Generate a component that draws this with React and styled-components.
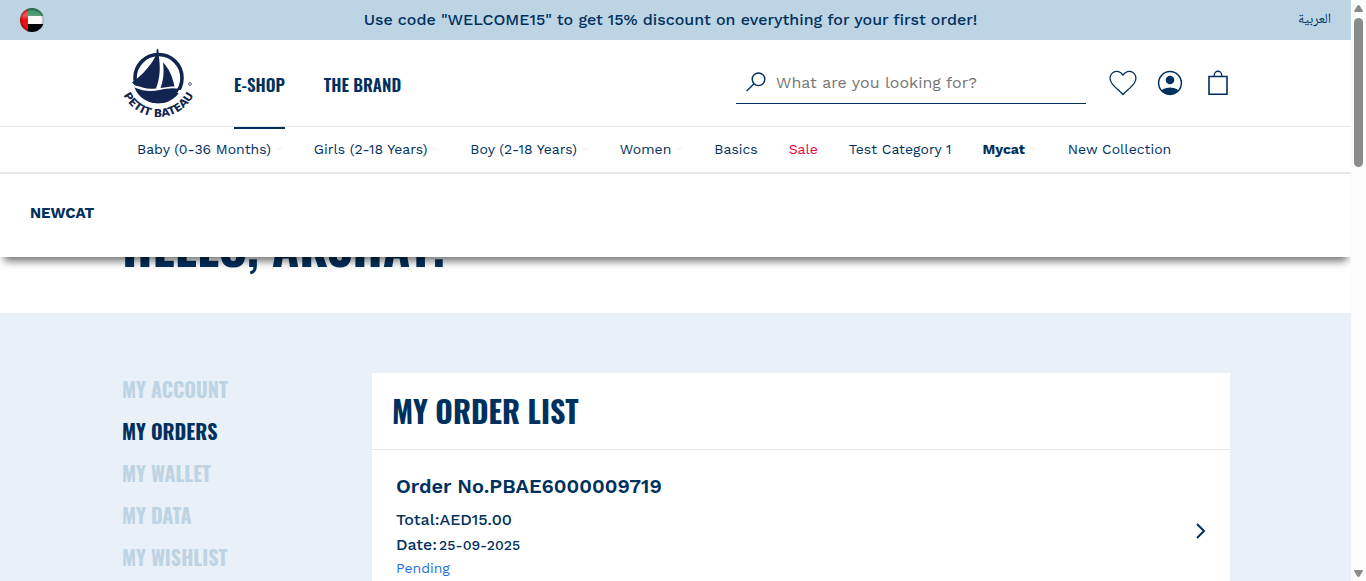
import React from "react";
import styled, { createGlobalStyle } from "styled-components";

const navy = "#00305e";
const sky = "#bdd4e4";
const pale = "#e9f0f7";
const rule = "#e8e8e8";
const display = `Oswald, "Roboto Condensed", "Liberation Sans", sans-serif`;
const body = `"Work Sans", Inter, "Liberation Sans", sans-serif`;

const GlobalStyle = createGlobalStyle`
  *, *::before, *::after { box-sizing: border-box; }
  body { margin: 0; background: #fff; color: ${navy}; font-family: ${body}; }
  h1, h2, h3, p, ul { margin: 0; padding: 0; }
  ul { list-style: none; }
  a { color: inherit; text-decoration: none; }
  button { display: flex; background: none; border: 0; padding: 0; color: inherit; font: inherit; cursor: pointer; }
`;

const Window = styled.div`
  display: grid;
  grid-template-columns: minmax(0, 1fr) 15px;
  height: 100vh;
  overflow: hidden;
`;

const Page = styled.div`
  position: relative;
  overflow: hidden;
`;

const Rail = styled.div`
  display: flex;
  flex-direction: column;
  align-items: center;
  background: #fcfcfc;
  padding: 5px 0 4px;
`;

const Thumb = styled.div`
  width: 9px;
  height: 149px;
  margin: 6px 0 auto;
  border-radius: 5px;
  background: #8b8b8b;
`;

const Promo = styled.div`
  display: grid;
  grid-template-columns: 90px minmax(0, 1fr) 100px;
  align-items: center;
  height: 40px;
  padding: 0 20px;
  background: ${sky};
`;

const PromoText = styled.p`
  text-align: center;
  font-size: 16px;
  font-weight: 500;
  line-height: 20px;
`;

const CountryButton = styled.button`
  width: 24px;
  height: 24px;
`;

const LanguageLink = styled.a`
  justify-self: end;
  font-family: "Noto Naskh Arabic", "Times New Roman", "DejaVu Sans", serif;
  font-size: 14px;
  line-height: 20px;
`;

const Masthead = styled.div`
  display: flex;
  height: 86px;
  padding: 0 122px;
`;

const LogoLink = styled.a`
  display: flex;
  width: 112px;
  padding-top: 8px;
`;

const MainNav = styled.nav`
  display: flex;
  gap: 39px;
  font-family: ${display};
  font-size: 17px;
  font-weight: 600;
  white-space: nowrap;
`;

const MainLink = styled.a`
  position: relative;
  z-index: 4;
  height: 89px;
  line-height: 90px;
  border-bottom: 2px solid ${(p) => (p.$active ? navy : "transparent")};
`;

const Search = styled.label`
  display: flex;
  align-items: center;
  gap: 10px;
  width: 350px;
  height: 44px;
  margin: 20px 23px 0 auto;
  padding-left: 10px;
  border-bottom: 1px solid ${navy};
`;

const SearchInput = styled.input`
  flex: 1;
  min-width: 0;
  padding: 2px 0 0;
  border: 0;
  outline: 0;
  background: transparent;
  color: ${navy};
  font: 400 16px/20px ${body};
  &::placeholder { color: #757575; opacity: 1; }
`;

const Actions = styled.div`
  display: flex;
  align-items: center;
  gap: 20px;
`;

const ActionButton = styled.button`
  justify-content: center;
  min-width: 22px;
  &:last-child { margin-left: 4px; }
`;

const Categories = styled.nav`
  position: relative;
  z-index: 3;
  display: flex;
  align-items: center;
  gap: 31px;
  height: 48px;
  padding: 0 137px 2px;
  background: #fff;
  border-top: 1px solid ${rule};
  border-bottom: 2px solid ${rule};
  font-size: 14px;
  line-height: 20px;
  white-space: nowrap;
`;

const Category = styled.a`
  display: flex;
  align-items: center;
  gap: 4px;
  color: ${(p) => (p.$sale ? "#e8003f" : navy)};
  font-weight: ${(p) => (p.$active ? 700 : 400)};
`;

const MegaMenu = styled.div`
  position: absolute;
  z-index: 2;
  left: 0;
  right: 0;
  height: 83px;
  padding: 29px 30px;
  background: #fff;
  box-shadow: 0 8px 8px -4px rgba(0, 0, 0, 0.56);
  font-size: 15px;
  font-weight: 700;
  line-height: 20px;
`;

const Greeting = styled.div`
  height: 139px;
  padding: 40px 122px 0;
`;

const GreetingTitle = styled.h1`
  font: 700 50px/60px ${display};
`;

const Account = styled.main`
  display: flex;
  min-height: 400px;
  padding: 60px 121px 60px 122px;
  background: ${pale};
`;

const Side = styled.ul`
  width: 250px;
  font: 700 20px/32px ${display};
`;

const SideItem = styled.li`
  padding-bottom: 10px;
  color: ${(p) => (p.$active ? navy : sky)};
`;

const Card = styled.section`
  flex: 1;
  background: #fff;
`;

const CardTitle = styled.h2`
  height: 77px;
  padding: 18px 20px;
  border-bottom: 1px solid ${rule};
  font: 700 30px/40px ${display};
`;

const Order = styled.a`
  display: flex;
  align-items: flex-start;
  justify-content: space-between;
  padding: 23px 24px;
`;

const OrderArrow = styled.span`
  display: flex;
  padding-top: 50px;
`;

const OrderNumber = styled.h3`
  margin-bottom: 8px;
  font-size: 20px;
  font-weight: 600;
  line-height: 26px;
`;

const OrderLine = styled.p`
  font-size: 16px;
  font-weight: 500;
  line-height: 25px;
`;

const OrderDate = styled.span`
  margin-left: 2px;
  font-size: 14px;
`;

const Status = styled.p`
  color: #1c6fe0;
  font-size: 14px;
  line-height: 20px;
`;

const LogoImage = styled.svg`
  overflow: visible;
`;

const LogoText = styled.text`
  fill: #122550;
  font: 700 11px "DejaVu Sans", sans-serif;
`;

const Flag = () => (
  <svg width="24" height="24" viewBox="0 0 24 24" aria-hidden="true">
    <defs>
      <clipPath id="disc"><circle cx="12" cy="12" r="12" /></clipPath>
      <linearGradient id="gloss" x1="0" y1="0" x2="0" y2="1">
        <stop offset="0" stopColor="#fff" stopOpacity="0.1" />
        <stop offset="0.3" stopColor="#fff" stopOpacity="0.3" />
        <stop offset="0.5" stopColor="#fff" stopOpacity="0" />
      </linearGradient>
      <radialGradient id="shade">
        <stop offset="0.75" stopColor="#000" stopOpacity="0" />
        <stop offset="1" stopColor="#000" stopOpacity="0.35" />
      </radialGradient>
    </defs>
    <g clipPath="url(#disc)">
      <path fill="#fafafa" d="M0 0h24v24H0z" />
      <path fill="#187a48" d="M7 0h17v8H7z" />
      <path fill="#050505" d="M7 16h17v8H7z" />
      <path fill="#ee1111" d="M0 0h8v24H0z" />
      <path fill="url(#gloss)" d="M0 0h24v24H0z" />
      <path fill="url(#shade)" d="M0 0h24v24H0z" />
    </g>
  </svg>
);

const Logo = () => (
  <LogoImage width="76" height="74" viewBox="0 0 76 74" role="img" aria-label="Petit Bateau">
    <circle cx="36.500" cy="30" r="23.500" fill="none" stroke="#122550" strokeWidth="3.600" />
    <path d="M8 36 30 42h32l-4 3H32L10 40z" fill="#fff" />
    <path fill="#122550" d="M34.500 2c.8-1.300 1.700-1.300 2 .2L36.500 6c2 12 2 23-2.500 34.500-8 .8-15-.5-22.500-4.500l-1.500-1.500c10-7 20-18 24.500-28.500z" />
    <path fill="#122550" d="M41 14.500c6 6 9.500 14 11.500 24-5 0-8 .6-14 1.500 3-8 3.700-16 2.500-25.500z" />
    <path fill="#122550" d="M12.500 39.500c9 4 17 4 25 2.500 7-1.300 13-2.500 20-1-4 8-12 14.300-21.500 14.300S16 49.500 12.500 39.500z" />
    <path id="arc" d="M-2.500 30A39 39 0 0 0 75.500 30" fill="none" />
    <LogoText>
      <textPath href="#arc" startOffset="50%" textAnchor="middle">PETIT BATEAU</textPath>
    </LogoText>
    <circle cx="68" cy="36" r="1.400" fill="none" stroke="#122550" strokeWidth="0.700" />
  </LogoImage>
);

const SearchIcon = () => (
  <svg width="20" height="20" viewBox="0 0 20 20" fill="none" stroke={navy} strokeWidth="1.400" aria-hidden="true">
    <circle cx="12.500" cy="7.300" r="6.300" />
    <path d="M8 11.800.7 19" />
  </svg>
);

const Heart = () => (
  <svg width="28" height="26" viewBox="0 0 28 26" fill="none" stroke={navy} strokeWidth="1.300" strokeLinejoin="round" aria-hidden="true">
    <path d="M14 24.500C10 20.500 5 16.500 2.600 13 0 9 .8 4.600 4 2.500c3.600-2.300 8-.9 10 2.600 2-3.500 6.400-4.900 10-2.600 3.200 2.100 4 6.500 1.400 10.500C23 16.500 18 20.500 14 24.500z" />
  </svg>
);

const Person = () => (
  <svg width="26" height="26" viewBox="0 0 26 26" aria-hidden="true">
    <defs><clipPath id="ring"><circle cx="13" cy="13" r="11.500" /></clipPath></defs>
    <circle cx="13" cy="13" r="11.400" fill="none" stroke={navy} strokeWidth="1.500" />
    <circle cx="13" cy="10" r="4.300" fill={navy} />
    <ellipse cx="13" cy="23" rx="9.500" ry="5.600" fill={navy} clipPath="url(#ring)" />
  </svg>
);

const Bag = () => (
  <svg width="20" height="26" viewBox="0 0 20 26" fill="none" stroke={navy} strokeWidth="1.600" aria-hidden="true">
    <path d="M1 6.500h18v17.700H1z" />
    <path d="M6.300 6.500V5a3.700 3.700 0 0 1 7.400 0v1.500" strokeWidth="1.400" />
  </svg>
);

const Caret = () => (
  <svg width="8" height="6" viewBox="0 0 8 6" fill="none" stroke="#fbf4f5" strokeWidth="1.500" aria-hidden="true">
    <path d="m1 1 3 3 3-3" />
  </svg>
);

const Chevron = () => (
  <svg width="10" height="16" viewBox="0 0 10 16" fill="none" stroke={navy} strokeWidth="2" aria-hidden="true">
    <path d="m1 1 7 7-7 7" />
  </svg>
);

const Arrow = ({ down }) => (
  <svg width="9" height="7" viewBox="0 0 9 7" fill="#8b8b8b" aria-hidden="true">
    <path d={down ? "M.5 0h8q.8.500.3 1.200L5.500 6.500q-1 1-2 0L.2 1.200Q-.3.500.5 0z" : "M.5 7h8q.8-.5.3-1.200L5.500.5q-1-1-2 0L.2 5.800Q-.3 6.500.5 7z"} />
  </svg>
);

const categories = [
  { label: "Baby (0-36 Months)", caret: true },
  { label: "Girls (2-18 Years)", caret: true },
  { label: "Boy (2-18 Years)", caret: true },
  { label: "Women", caret: true },
  { label: "Basics" },
  { label: "Sale", sale: true },
  { label: "Test Category 1" },
  { label: "Mycat", caret: true, active: true },
  { label: "New Collection" },
];

const accountLinks = ["MY ACCOUNT", "MY ORDERS", "MY WALLET", "MY DATA", "MY WISHLIST"];

export default function App() {
  return (
    <>
      <GlobalStyle />
      <Window>
        <Page>
          <header>
            <Promo>
              <CountryButton aria-label="United Arab Emirates"><Flag /></CountryButton>
              <PromoText>Use code "WELCOME15" to get 15% discount on everything for your first order!</PromoText>
              <LanguageLink href="#ar" lang="ar">العربية</LanguageLink>
            </Promo>
            <Masthead>
              <LogoLink href="#home"><Logo /></LogoLink>
              <MainNav>
                <MainLink href="#shop" $active>E-SHOP</MainLink>
                <MainLink href="#brand">THE BRAND</MainLink>
              </MainNav>
              <Search>
                <SearchIcon />
                <SearchInput type="search" aria-label="Search" placeholder="What are you looking for?" />
              </Search>
              <Actions>
                <ActionButton aria-label="Wishlist"><Heart /></ActionButton>
                <ActionButton aria-label="Account"><Person /></ActionButton>
                <ActionButton aria-label="Bag"><Bag /></ActionButton>
              </Actions>
            </Masthead>
            <Categories>
              {categories.map((c) => (
                <Category key={c.label} href="#category" $sale={c.sale} $active={c.active}>
                  {c.label}
                  {c.caret && <Caret />}
                </Category>
              ))}
            </Categories>
            <MegaMenu><a href="#newcat">NEWCAT</a></MegaMenu>
          </header>
          <Greeting><GreetingTitle>HELLO, AKSHAY!</GreetingTitle></Greeting>
          <Account>
            <Side>
              {accountLinks.map((label) => (
                <SideItem key={label} $active={label === "MY ORDERS"}><a href="#account">{label}</a></SideItem>
              ))}
            </Side>
            <Card>
              <CardTitle>MY ORDER LIST</CardTitle>
              <Order href="#order">
                <div>
                  <OrderNumber>Order No.PBAE6000009719</OrderNumber>
                  <OrderLine>Total:AED15.00</OrderLine>
                  <OrderLine>Date:<OrderDate>25-09-2025</OrderDate></OrderLine>
                  <Status>Pending</Status>
                </div>
                <OrderArrow><Chevron /></OrderArrow>
              </Order>
            </Card>
          </Account>
        </Page>
        <Rail aria-hidden="true">
          <Arrow />
          <Thumb />
          <Arrow down />
        </Rail>
      </Window>
    </>
  );
}
